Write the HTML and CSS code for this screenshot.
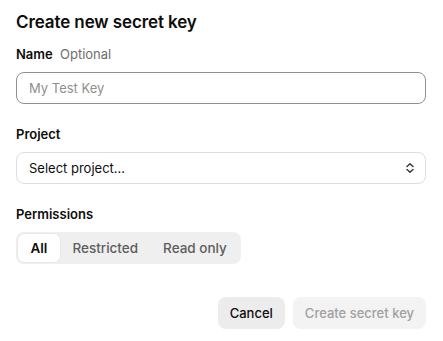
FILE: index.html
```html
<!DOCTYPE html>
<html>
<head>
<meta charset="utf-8">
<link rel="stylesheet" href="styles.css">
</head>
<body>
<div class="dialog">
  <h1 class="title">Create new secret key</h1>
  <div class="field first">
    <div class="label">Name <span class="hint">Optional</span></div>
    <div class="input"><span class="placeholder">My Test Key</span></div>
  </div>
  <div class="field">
    <div class="label">Project</div>
    <div class="select">
      <span>Select project...</span>
      <svg class="chev" width="10" height="12" viewBox="0 0 10 12" fill="none" stroke="#333" stroke-width="1.4" stroke-linecap="round" stroke-linejoin="round"><path d="M2 4.5 L5 1.8 L8 4.5"/><path d="M2 7.5 L5 10.2 L8 7.5"/></svg>
    </div>
  </div>
  <div class="field">
    <div class="label">Permissions</div>
    <div class="segmented">
      <div class="seg active">All</div>
      <div class="seg">Restricted</div>
      <div class="seg">Read only</div>
    </div>
  </div>
  <div class="actions">
    <button class="btn cancel">Cancel</button>
    <button class="btn primary">Create secret key</button>
  </div>
</div>
</body>
</html>
```
FILE: styles.css
```css
* { box-sizing: border-box; }
html, body { margin: 0; background: #fff; }
body { font-family: Inter, "Noto Sans", sans-serif; color: #0d0d0d; }
.dialog { padding: 11px 17px 0 16px; display: flex; flex-direction: column; width: 443px; }
.title { font-size: 17px; font-weight: 600; margin: 0; line-height: 22px; letter-spacing: -0.1px; }
.field { margin-top: 22px; display: flex; flex-direction: column; }
.field.first { margin-top: 13px; }
.label { font-size: 13px; font-weight: 600; line-height: 16px; margin-bottom: 10px; }
.hint { font-weight: 400; color: #6e6e6e; margin-left: 4px; }
.input, .select { height: 32px; border-radius: 8px; display: flex; align-items: center; padding: 0 12px; font-size: 13px; }
.input { border: 1px solid #8f8f8f; }
.placeholder { color: #8f8f8f; }
.select { border: 1px solid #dedede; justify-content: space-between; padding-right: 10px; color: #0d0d0d; }
.chev { display: block; }
.segmented { display: flex; align-self: flex-start; background: #efefef; border-radius: 8px; padding: 2px; height: 32px; }
.seg { font-size: 13.5px; font-weight: 500; color: #5d5d5d; padding: 0 12.5px; display: flex; align-items: center; border-radius: 6px; }
.seg.active { background: #fff; color: #0d0d0d; font-weight: 600; box-shadow: 0 0 0 0.5px rgba(0,0,0,0.06); }
.actions { display: flex; justify-content: flex-end; gap: 8px; margin-top: 33px; }
.btn { font-family: inherit; font-size: 13px; font-weight: 500; height: 32px; border: none; border-radius: 8px; padding: 0 12px; }
.cancel { background: #ececec; color: #0d0d0d; }
.primary { background: #f3f3f3; color: #a0a0a0; }
```
